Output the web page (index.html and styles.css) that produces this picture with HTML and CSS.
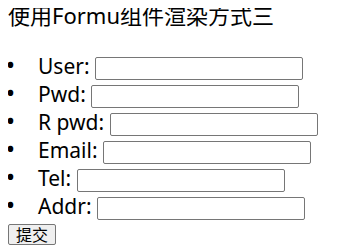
FILE: index.html
```html
<!DOCTYPE html>
<html>
<head>
<meta charset="utf-8">
<link rel="stylesheet" href="styles.css">
</head>
<body>
<div class="title">使用Formu组件渲染方式三</div>
<form class="form">
<ul class="fields">
<li>User: <input type="text" class="field"></li>
<li>Pwd: <input type="password" class="field"></li>
<li>R pwd: <input type="password" class="field"></li>
<li>Email: <input type="text" class="field"></li>
<li>Tel: <input type="text" class="field"></li>
<li>Addr: <input type="text" class="field"></li>
</ul>
<button type="button" class="submit">提交</button>
</form>
</body>
</html>
```
FILE: styles.css
```css
body {
  margin: 8px;
  font-family: "Noto Sans", "Noto Sans CJK SC", sans-serif;
  color: #000;
  background: #fff;
}
.title {
  font-size: 22px;
  line-height: 15px;
}
.form {
  margin: 0;
}
.fields {
  margin: 27px 0 0;
  padding-left: 30px;
  font-size: 21px;
  line-height: 28px;
}
.fields li {
  height: 28px;
}
.fields li::marker {
  font-size: 25px;
  content: "\2022\2002\2005\2006";
}
.field {
  width: 208px;
  height: 23px;
  box-sizing: border-box;
  border: 1px solid #767676;
  border-radius: 2px;
  padding: 1px 2px;
  font-size: 13px;
  vertical-align: middle;
}
.submit {
  display: block;
  margin-top: 6px;
  height: 21px;
  box-sizing: border-box;
  font-family: "Noto Sans CJK SC", sans-serif;
  font-size: 16px;
  line-height: 19px;
  padding: 0 7px;
  border: 1px solid #767676;
  border-radius: 2px;
  background: #efefef;
}
```
